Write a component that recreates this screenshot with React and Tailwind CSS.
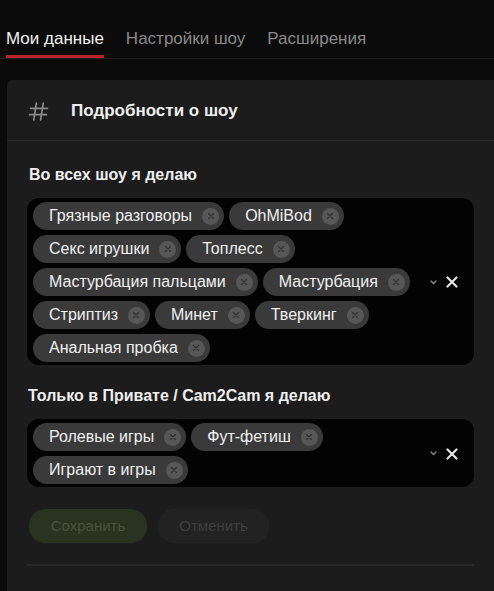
import React from "react";

const allShows = [
  "Грязные разговоры",
  "OhMiBod",
  "Секс игрушки",
  "Топлесс",
  "Мастурбация пальцами",
  "Мастурбация",
  "Стриптиз",
  "Минет",
  "Тверкинг",
  "Анальная пробка",
];

const privateShows = ["Ролевые игры", "Фут-фетиш", "Играют в игры"];

function Tag({ label }) {
  return (
    <div className="h-[28px] flex items-center pl-[16px] pr-[5px] rounded-full bg-[#3a3a3a] text-[#f0f0f0] text-[16px] leading-none">
      <span>{label}</span>
      <span className="ml-[10px] w-[17px] h-[17px] rounded-full bg-[#575757] flex items-center justify-center">
        <svg width="8" height="8" viewBox="0 0 8 8">
          <path d="M1.5 1.5 L6.5 6.5 M6.5 1.5 L1.5 6.5" stroke="#333" strokeWidth="1.4" strokeLinecap="round" />
        </svg>
      </span>
    </div>
  );
}

function MultiSelect({ items }) {
  return (
    <div className="flex items-center rounded-[12px] bg-[#030303] pl-[6px] pr-[16px] pt-[4px] pb-[3px]">
      <div className="flex-1 flex flex-wrap gap-x-[5px] gap-y-[5px]">
        {items.map(t => (
          <Tag key={t} label={t} />
        ))}
      </div>
      <div className="flex items-center gap-[9px]">
        <svg width="7" height="5" viewBox="0 0 7 5">
          <path d="M1 1 L3.5 3.5 L6 1" stroke="#8a8a8a" strokeWidth="1.3" fill="none" strokeLinecap="round" />
        </svg>
        <svg width="12" height="12" viewBox="0 0 12 12">
          <path d="M1.5 1.5 L10.5 10.5 M10.5 1.5 L1.5 10.5" stroke="#e6e6e6" strokeWidth="2.2" strokeLinecap="round" />
        </svg>
      </div>
    </div>
  );
}

export default function App() {
  return (
    <div className="h-[591px] overflow-hidden bg-[#0b0b0b] font-['Liberation_Sans',Arial,sans-serif]">
      <div className="pt-[28px] border-b border-[#1e1e1e]">
        <div className="flex gap-[22px] pl-[6px] text-[17px] leading-[22px]">
          <div className="text-[#f2f2f2] pb-[5px] border-b-[3px] border-[#b7232f]">Мои данные</div>
          <div className="text-[#8a8a8a] pb-[5px] border-b-[3px] border-transparent">Настройки шоу</div>
          <div className="text-[#8a8a8a] pb-[5px] border-b-[3px] border-transparent">Расширения</div>
        </div>
      </div>

      <div className="mt-[21px] ml-[7px] bg-[#1c1c1c] rounded-tl-[6px]">
        <div className="h-[61px] flex items-center pt-[2px] pl-[21px] border-b border-[#272727]">
          <svg width="21" height="21" viewBox="0 0 20 20">
            <path d="M8 2 L5.5 18 M14.5 2 L12 18 M2.5 7 H18.5 M1.5 13 H17.5" stroke="#8c8c8c" strokeWidth="1.6" strokeLinecap="round" />
          </svg>
          <span className="ml-[22px] text-[17px] font-bold text-[#efefef]">Подробности о шоу</span>
        </div>

        <div className="px-[20px] pt-[24px]">
          <div className="text-[16px] leading-[20px] font-bold text-[#efefef] pl-[2px] mb-[13px]">Во всех шоу я делаю</div>
          <MultiSelect items={allShows} />

          <div className="mt-[21px] text-[16px] leading-[20px] font-bold text-[#efefef] pl-[1px] mb-[13px]">
            Только в Привате / Cam2Cam я делаю
          </div>
          <MultiSelect items={privateShows} />

          <div className="mt-[22px] flex gap-[11px] pl-[2px]">
            <button className="h-[34px] w-[118px] rounded-[16px] bg-[#2a3322] text-[#46543a] text-[15px]">Сохранить</button>
            <button className="h-[34px] w-[111px] rounded-[16px] bg-[#222222] text-[#3e3e3e] text-[15px]">Отменить</button>
          </div>

          <div className="mt-[21px] border-t-2 border-[#272727]" />
          <div className="h-[40px]" />
        </div>
      </div>
    </div>
  );
}
